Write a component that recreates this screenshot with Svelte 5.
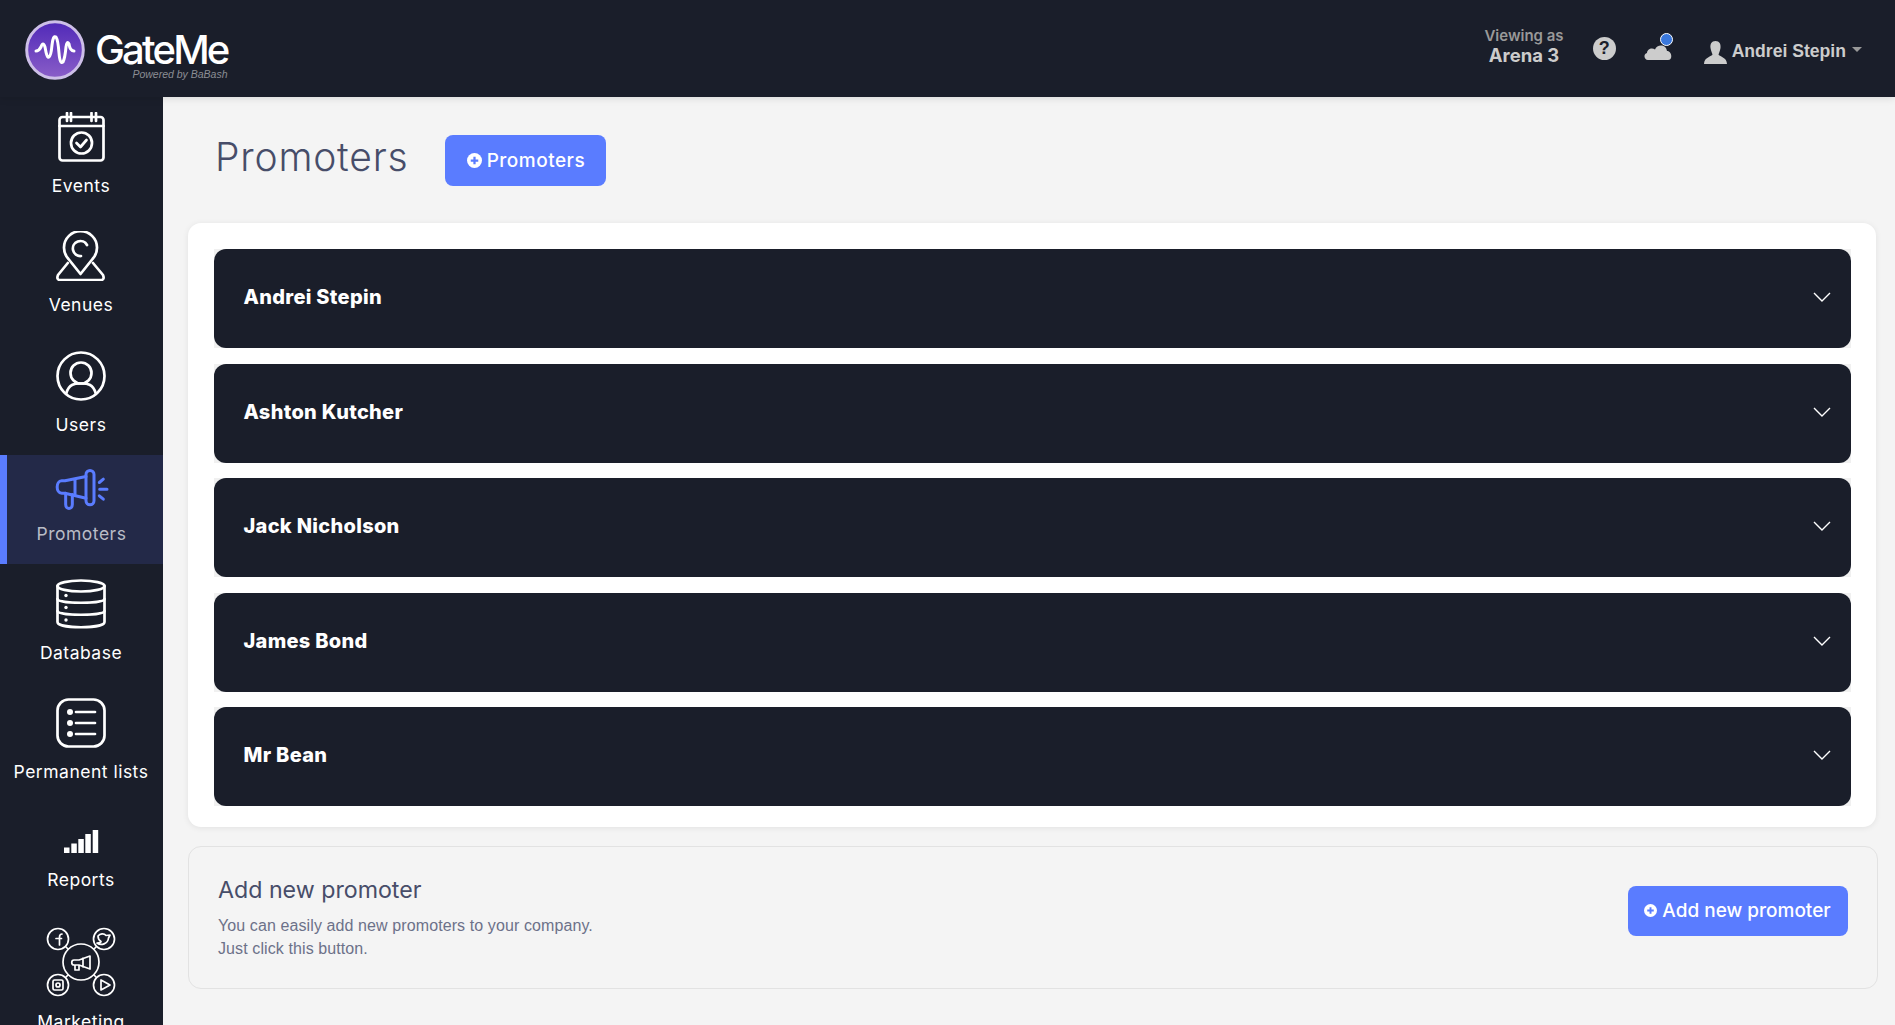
<script>
  const names = ["Andrei Stepin", "Ashton Kutcher", "Jack Nicholson", "James Bond", "Mr Bean"];
</script>

<div class="app">
  <header class="topbar">
    <div class="logo">
      <svg class="logo-mark" viewBox="0 0 60 60" width="60" height="60">
        <defs>
          <linearGradient id="logo-bg" x1="0" y1="0" x2="0" y2="1">
            <stop offset="0" stop-color="#5029b8" />
            <stop offset="1" stop-color="#8a5ec8" />
          </linearGradient>
        </defs>
        <circle cx="30" cy="30" r="28.3" fill="url(#logo-bg)" stroke="#cdbfe8" stroke-width="3" />
        <path d="M11 31 Q14 31 16 27 Q18 21 20 27 Q22 39 24 37 Q26 36 27 25 Q28 15 31 17 Q33 20 34 33 Q35 45 38 42 Q40 38 41 27 Q42 20 44 24 Q45 31 49 31" fill="none" stroke="#fff" stroke-width="3" stroke-linecap="round" stroke-linejoin="round" />
      </svg>
      <div class="logo-text">
        <span class="logo-name">GateMe</span>
        <span class="logo-sub">Powered by BaBash</span>
      </div>
    </div>

    <div class="top-actions">
      <div class="viewing">
        <span class="viewing-label">Viewing as</span>
        <span class="viewing-name">Arena 3</span>
      </div>
      <span class="help">?</span>
      <span class="cloud">
        <svg viewBox="0 0 28 16" width="28" height="16">
          <path d="M4 16 C0 16 -1 10 3 9 C3 5 8 3 11 5.500 C13 0 22 0 23 7 C28 7 29 16 24 16 Z" fill="#ccc" />
        </svg>
        <span class="cloud-dot"></span>
      </span>
      <div class="user">
        <svg viewBox="0 0 23 23" width="23" height="23">
          <path d="M11.500 0 C15.500 0 17 3 16.500 7 C16 10 15 12 14.500 13.500 C15 15.500 23 16 23 23 H0 C0 16 8 15.500 8.500 13.500 C8 12 7 10 6.500 7 C6 3 7.500 0 11.500 0 Z" fill="#ccc" />
        </svg>
        <span class="user-name">Andrei Stepin</span>
        <span class="caret"></span>
      </div>
    </div>
  </header>

  <div class="body">
    <nav class="sidebar">
      <a class="nav-item">
        <svg class="icon" viewBox="0 0 47 50" width="47" height="50">
          <rect x="1.500" y="5" width="44" height="43.500" rx="3" />
          <path d="M1.500 14 H45.500 M9 1 V9 M13 1 V9 M33.500 1 V9 M38 1 V9" />
          <circle cx="23.500" cy="31" r="10.500" />
          <path d="M18.500 31 L22.500 35 L28.500 28" />
        </svg>
        <span>Events</span>
      </a>
      <a class="nav-item">
        <svg class="icon" viewBox="0 0 50 50" width="50" height="50">
          <path d="M24.500 43 L12.500 28 A16.500 16.500 0 1 1 36.500 28 Z" />
          <path d="M31 14 A7.500 7.500 0 1 0 25 25" />
          <path d="M11.800 32 L2 44 Q0 49 4.500 49 H44.500 Q49 49 47 44 L37 32" />
        </svg>
        <span>Venues</span>
      </a>
      <a class="nav-item">
        <svg class="icon" viewBox="0 0 50 50" width="50" height="50">
          <circle cx="25" cy="25" r="23.500" />
          <circle cx="25" cy="22" r="10.500" />
          <path d="M10 43 C13 32 20 32.500 25 32.500 C30 32.500 37 32 40 43" />
        </svg>
        <span>Users</span>
      </a>
      <a class="nav-item active">
        <svg class="icon promo" viewBox="0 0 162 125" width="54" height="42">
          <rect x="93" y="4" width="24" height="103" rx="12" />
          <path d="M93 22 L30 35 H20 C2 35 2 72 20 72 H30 L93 87 M60 29 V78" />
          <path d="M32 72 V106 C32 122 52 122 52 106 V76" />
          <path d="M133 40 L145 30 M134 60 H156 M133 80 L145 90" />
        </svg>
        <span>Promoters</span>
      </a>
      <a class="nav-item">
        <svg class="icon" viewBox="0 0 50 50" width="50" height="50">
          <ellipse cx="25" cy="7" rx="23.500" ry="5.500" />
          <path d="M1.500 7 V43 C1.500 50 48.500 50 48.500 43 V7" />
          <path d="M1.500 20 C1.500 25 48.500 25 48.500 20 M1.500 32 C1.500 37 48.500 37 48.500 32" />
          <circle class="dot" cx="10" cy="16.500" r="1.700" />
          <circle class="dot" cx="10" cy="28.500" r="1.700" />
          <circle class="dot" cx="10" cy="41" r="1.700" />
        </svg>
        <span>Database</span>
      </a>
      <a class="nav-item">
        <svg class="icon" viewBox="0 0 50 50" width="50" height="50">
          <rect x="1.500" y="1.500" width="47" height="47" rx="11" />
          <path d="M20 14 H39 M20 25 H39 M20 36 H39" />
          <circle class="dot" cx="14" cy="14" r="3" />
          <circle class="dot" cx="14" cy="25" r="3" />
          <circle class="dot" cx="14" cy="36" r="3" />
        </svg>
        <span>Permanent lists</span>
      </a>
      <a class="nav-item reports">
        <svg class="icon" viewBox="0 0 35 23" width="35" height="23">
          <rect class="dot" x="0" y="17.500" width="5.500" height="5.500" />
          <rect class="dot" x="7.300" y="13.500" width="5.500" height="9.500" />
          <rect class="dot" x="14.300" y="9" width="5.500" height="14" />
          <rect class="dot" x="21.300" y="4" width="5.500" height="19" />
          <rect class="dot" x="28.700" y="0" width="5.500" height="23" />
        </svg>
        <span>Reports</span>
      </a>
      <a class="nav-item marketing">
        <svg class="icon thin" viewBox="0 0 70 70" width="70" height="70">
          <circle cx="35" cy="35" r="18" />
          <circle cx="12" cy="12" r="10.500" />
          <circle cx="58" cy="12" r="10.500" />
          <circle cx="12" cy="58" r="10.500" />
          <circle cx="58" cy="58" r="10.500" />
          <path d="M20 20 L22 22 M50 20 L48 22 M20 50 L22 48 M50 50 L48 48" />
          <path d="M13.500 18 V10 C13.500 7.500 15 7 16 7 M10 11.500 H15.500" />
          <path d="M52 9 C54 6.500 58 6 60 8.500 L64 8 L62.500 11 C62 17 55 19 51 16 C54 16 55 15 55 14.500 C52.500 13 52 11 52 9 Z" />
          <rect x="7" y="53" width="10" height="10" rx="1.500" />
          <circle cx="12" cy="58" r="2" />
          <path d="M55 53 V63 L64 58 Z" />
          <path d="M44 29 L33 33 H28 C25 33 25 38 28 38 H33 L44 42 Z M29 38 V43 H33 V39 M37 31 V40" />
        </svg>
        <span>Marketing</span>
      </a>
    </nav>

    <main class="content">
      <div class="title-row">
        <h1>Promoters</h1>
        <button type="button" class="btn">
          <svg class="plus" viewBox="0 0 16 16" width="15" height="15">
            <circle cx="8" cy="8" r="8" fill="#fff" />
            <path d="M4 8 H12 M8 4 V12" stroke="#5a7cff" stroke-width="2.400" />
          </svg>
          Promoters
        </button>
      </div>

      <section class="card">
        {#each names as name}
          <div class="row-wrap">
            <div class="row">
              <span class="row-name">{name}</span>
              <svg class="chevron" viewBox="0 0 18 10" width="18" height="10">
                <path d="M1 1 L9 9 L17 1" fill="none" stroke="#fff" stroke-width="1.400" />
              </svg>
            </div>
          </div>
        {/each}
      </section>

      <section class="add">
        <div class="add-text">
          <h2>Add new promoter</h2>
          <p>You can easily add new promoters to your company.<br />Just click this button.</p>
        </div>
        <button type="button" class="btn btn-add">
          <svg class="plus" viewBox="0 0 16 16" width="13" height="13">
            <circle cx="8" cy="8" r="8" fill="#fff" />
            <path d="M4 8 H12 M8 4 V12" stroke="#5a7cff" stroke-width="2.400" />
          </svg>
          Add new promoter
        </button>
      </section>
    </main>
  </div>
</div>

<style>
  :global(body) {
    margin: 0;
    overflow: hidden;
    background: #f4f4f4;
  }

  .app {
    height: 100vh;
    display: flex;
    flex-direction: column;
    overflow: hidden;
    font-family: Inter, "Liberation Sans", sans-serif;
  }

  .topbar {
    height: 97px;
    flex: none;
    background: #1a1e2a;
    box-shadow: 0 1px 8px rgba(0, 0, 0, 0.12);
    display: flex;
    align-items: center;
    justify-content: space-between;
    padding: 0 33px 0 25px;
    position: relative;
    z-index: 2;
  }

  .logo {
    display: flex;
    align-items: center;
    gap: 10px;
    margin-top: 3px;
  }

  .logo-mark {
    display: block;
  }

  .logo-text {
    display: flex;
    flex-direction: column;
    align-items: flex-end;
    margin-top: 11px;
  }

  .logo-name {
    color: #fff;
    font-size: 40px;
    font-weight: 500;
    line-height: 36px;
    letter-spacing: -2.800px;
  }

  .logo-sub {
    color: #8b8d94;
    font: italic 10.500px/12px "Liberation Sans", sans-serif;
  }

  .top-actions {
    display: flex;
    align-items: center;
    color: #ccc;
  }

  .viewing {
    display: flex;
    flex-direction: column;
    align-items: center;
    margin-right: 29px;
    margin-top: -5px;
  }

  .viewing-label {
    font-size: 15px;
    font-weight: 600;
    line-height: 18px;
    color: #999;
  }

  .viewing-name {
    font-size: 18.500px;
    font-weight: 700;
    line-height: 21px;
  }

  .help {
    width: 23px;
    height: 23px;
    border-radius: 50%;
    background: #ccc;
    color: #1a1e2a;
    font: bold 18px/23px "Liberation Sans", sans-serif;
    text-align: center;
    margin-right: 28px;
  }

  .cloud {
    position: relative;
    width: 28px;
    height: 16px;
    margin-right: 32px;
    margin-top: 6px;
  }

  .cloud svg {
    display: block;
  }

  .cloud-dot {
    position: absolute;
    right: -1px;
    top: -11px;
    width: 11px;
    height: 11px;
    border-radius: 50%;
    background: #3a78dc;
    border: 1px solid #fff;
  }

  .user {
    display: flex;
    align-items: center;
    gap: 5px;
    margin-top: 5px;
  }

  .user svg {
    display: block;
    margin-top: 2px;
  }

  .user-name {
    font: bold 17.600px/22px "Liberation Sans", sans-serif;
  }

  .caret {
    width: 0;
    height: 0;
    margin-left: 1px;
    margin-bottom: 3px;
    border-left: 5px solid transparent;
    border-right: 5px solid transparent;
    border-top: 5px solid #999;
  }

  .body {
    flex: 1;
    display: flex;
    min-height: 0;
  }

  .sidebar {
    width: 163px;
    flex: none;
    background: #1a1e2a;
  }

  .nav-item {
    height: 119.330px;
    box-sizing: border-box;
    padding: 15px 1px 0 0;
    display: flex;
    flex-direction: column;
    align-items: center;
    color: #fff;
    font-size: 17.500px;
    line-height: 24px;
    letter-spacing: 0.500px;
    white-space: nowrap;
  }

  .nav-item span {
    margin-top: 12px;
  }

  .nav-item.active {
    height: 109px;
    padding: 14px 7px 0 0;
    background: #232948;
    border-left: 7px solid #5a7cff;
    color: #b9bcc6;
  }

  .nav-item.active span {
    margin-top: 11px;
  }

  .nav-item.reports {
    height: 113px;
    padding-top: 27px;
  }

  .nav-item.reports span {
    margin-top: 15px;
  }

  .nav-item.marketing {
    height: 110px;
    padding-top: 11px;
  }

  .nav-item.marketing span {
    margin-top: 13px;
  }

  .icon {
    display: block;
    flex: none;
    fill: none;
    stroke: #fff;
    stroke-width: 2.700;
    stroke-linecap: round;
    stroke-linejoin: round;
  }

  .icon .dot {
    fill: #fff;
    stroke: none;
  }

  .icon.promo {
    stroke: #5a7cff;
    stroke-width: 9;
  }

  .icon.thin {
    stroke-width: 1.700;
  }

  .content {
    flex: 1;
    min-width: 0;
    padding: 38px 19px 0 25px;
  }

  .title-row {
    display: flex;
    align-items: center;
    gap: 37px;
    padding-left: 27px;
    height: 51px;
    margin-bottom: 37px;
  }

  h1 {
    margin: -8px 0 0;
    font-size: 39px;
    font-weight: 300;
    line-height: 51px;
    color: #474d69;
    letter-spacing: 0.800px;
  }

  .btn {
    display: inline-flex;
    align-items: center;
    justify-content: center;
    gap: 5px;
    width: 161px;
    height: 51px;
    padding: 0;
    border: 0;
    border-radius: 8px;
    background: #5a7cff;
    color: #fff;
    font-family: inherit;
    font-size: 19px;
    font-weight: 500;
    letter-spacing: 0.500px;
  }

  .btn-add {
    width: 220px;
    height: 50px;
    letter-spacing: 0;
    margin-bottom: 14px;
  }

  .card {
    background: #fff;
    border-radius: 13px;
    box-shadow: 0 1px 6px rgba(0, 0, 0, 0.08);
    padding: 26px 25.500px 21px 25.500px;
    display: flex;
    flex-direction: column;
    gap: 15.500px;
  }

  .row-wrap {
    background: #f0f0f0;
  }

  .row {
    height: 99px;
    box-sizing: border-box;
    border-radius: 12px;
    background: #1a1e2a;
    display: flex;
    align-items: center;
    justify-content: space-between;
    padding: 0 20px 3px 30px;
  }

  .row-name {
    color: #fff;
    font-size: 20px;
    font-weight: 800;
    letter-spacing: 0.300px;
  }

  .add {
    margin: 19px -1.500px 0 0;
    height: 143px;
    box-sizing: border-box;
    border: 1px solid #e2e2e2;
    border-radius: 13px;
    display: flex;
    align-items: center;
    justify-content: space-between;
    padding: 0 29px;
  }

  .add-text {
    margin-top: -1px;
  }

  h2 {
    margin: 0 0 9px;
    font-size: 23.200px;
    font-weight: 400;
    line-height: 30px;
    color: #474d69;
  }

  p {
    margin: 0;
    font: 16px/23px "Liberation Sans", sans-serif;
    letter-spacing: 0.100px;
    color: #6c7189;
  }
</style>
